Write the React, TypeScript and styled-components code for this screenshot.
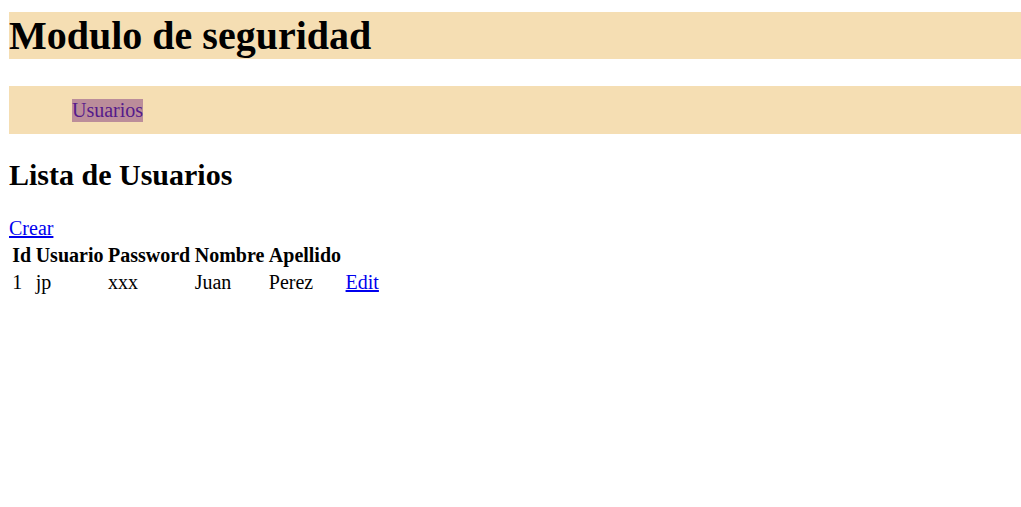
import React from "react";
import styled, { createGlobalStyle } from "styled-components";

const Global = createGlobalStyle`
  html, body { margin: 0; padding: 0; background: #fff; }
  body { font-family: "Liberation Serif", "Times New Roman", serif; color: #000; font-size: 20px; }
`;

const Page = styled.div`
  padding: 12px 0 0 9px;
`;

const Title = styled.h1`
  margin: 0;
  background: #f5deb3;
  font-size: 40px;
  font-weight: bold;
  line-height: 47px;
`;

const Nav = styled.nav`
  margin: 27px 0 0;
  height: 48px;
  background: #f5deb3;
  display: flex;
  align-items: center;
  padding-left: 63px;
`;

const NavLink = styled.a`
  display: inline-block;
  background: #bb8d9a;
  color: #551a8b;
  text-decoration: none;
  font-size: 20px;
  line-height: 23px;
`;

const Subtitle = styled.h2`
  margin: 24px 0 25px;
  font-size: 30px;
  font-weight: bold;
  line-height: 34px;
`;

const LinkBlue = styled.a`
  color: #0000ee;
  text-decoration: underline;
`;

const CreateLine = styled.div`
  line-height: 23px;
  padding-bottom: 1px;
`;

const Table = styled.table`
  border-spacing: 2.5px;
  border-collapse: separate;
  font-size: 20px;
  margin-top: 0;
`;

const Th = styled.th`
  padding: 1.25px;
  text-align: left;
  font-weight: bold;
  line-height: 22.5px;
`;

const Td = styled.td`
  padding: 1.25px;
  line-height: 22.5px;
`;

export default function App() {
  const rows = [{ id: 1, user: "jp", pass: "xxx", name: "Juan", last: "Perez" }];
  return (
    <>
      <Global />
      <Page>
        <Title>Modulo de seguridad</Title>
        <Nav>
          <NavLink href="#">Usuarios</NavLink>
        </Nav>
        <Subtitle>Lista de Usuarios</Subtitle>
        <CreateLine>
          <LinkBlue href="#">Crear</LinkBlue>
        </CreateLine>
        <Table>
          <thead>
            <tr>
              <Th>Id</Th>
              <Th>Usuario</Th>
              <Th>Password</Th>
              <Th>Nombre</Th>
              <Th>Apellido</Th>
            </tr>
          </thead>
          <tbody>
            {rows.map((r) => (
              <tr key={r.id}>
                <Td>{r.id}</Td>
                <Td>{r.user}</Td>
                <Td>{r.pass}</Td>
                <Td>{r.name}</Td>
                <Td>{r.last}</Td>
                <Td>
                  <LinkBlue href="#">Edit</LinkBlue>
                </Td>
              </tr>
            ))}
          </tbody>
        </Table>
      </Page>
    </>
  );
}
